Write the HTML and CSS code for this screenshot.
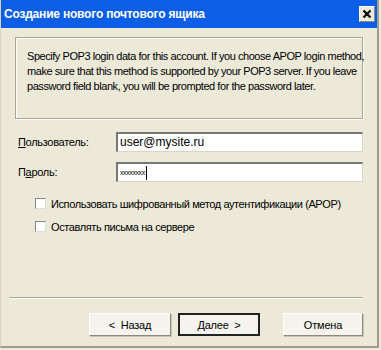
FILE: index.html
```html
<!DOCTYPE html>
<html lang="ru">
<head>
  <meta charset="UTF-8" />
  <title>Создание нового почтового ящика</title>
  <link rel="stylesheet" href="styles.css">
</head>
<body>
  <div class="window">
    <div class="titlebar">
      <span class="caption">Создание нового почтового ящика</span>
      <span class="close">
        <svg width="10" height="10" viewBox="0 0 10 10">
          <path d="M1.5 1.5 L8.5 8.5 M8.5 1.5 L1.5 8.5" stroke="#000" stroke-width="2.2" />
        </svg>
      </span>
    </div>

    <div class="content">
      <div class="info">
        Specify POP3 login data for this account. If you choose APOP login method,<br>
        make sure that this method is supported by your POP3 server. If you leave<br>
        password field blank, you will be prompted for the password later.
      </div>

      <div class="row">
        <label class="label"><u>П</u>ользователь:</label>
        <div class="field">user@mysite.ru</div>
      </div>
      <div class="row">
        <label class="label">П<u>а</u>роль:</label>
        <div class="field pass">xxxxxxxx<span class="caret"></span></div>
      </div>

      <div class="checks">
        <div class="check"><span class="box"></span>Использовать шифрованный метод аутентификации (APOP)</div>
        <div class="check"><span class="box"></span>Оставлять письма на сервере</div>
      </div>

      <div class="spacer"></div>
      <div class="sep"></div>

      <div class="buttons">
        <button class="btn">&lt; &nbsp;Назад</button>
        <button class="btn default">Далее &nbsp;&gt;</button>
        <button class="btn cancel">Отмена</button>
      </div>
    </div>
  </div>
</body>
</html>
```

FILE: styles.css
```css
* {
  box-sizing: border-box;
  margin: 0;
  padding: 0;
}

body {
  width: 381px;
  height: 350px;
  overflow: hidden;
  background: #ece9d8;
  font-family: "Liberation Sans", Arial, sans-serif;
  font-size: 11px;
  letter-spacing: -0.3px;
  color: #000;
}

.window {
  width: 379px;
  height: 348px;
  display: flex;
  flex-direction: column;
  background: #ece9d8;
  border-right: 2px solid #a09d8c;
  border-bottom: 2px solid #a09d8c;
  border-left: 1px solid #d8d4c4;
}

.titlebar {
  height: 28px;
  background: #0c5ee6;
  display: flex;
  align-items: center;
  justify-content: space-between;
  padding: 0 2px 0 3px;
}

.caption {
  color: #fff;
  font-weight: bold;
  font-size: 12px;
  letter-spacing: -0.2px;
}

.close {
  width: 16px;
  height: 16px;
  background: #ece9d8;
  border: 1px solid #fff;
  border-right-color: #888;
  border-bottom-color: #888;
  display: flex;
  align-items: center;
  justify-content: center;
}

.content {
  flex: 1;
  display: flex;
  flex-direction: column;
  padding: 9px 14px 10px 14px;
}

.info {
  height: 82px;
  border: 1px solid #a8a594;
  box-shadow: inset 1px 1px 0 #fff, 1px 1px 0 #fff;
  padding: 11px 4px 0 11px;
  line-height: 15px;
  letter-spacing: -0.45px;
  white-space: nowrap;
  margin-bottom: 13px;
}

.row {
  display: flex;
  align-items: center;
  height: 20px;
  margin-bottom: 10px;
}

.label {
  width: 101px;
  padding-left: 3px;
}

.field {
  flex: 1;
  height: 20px;
  background: #fff;
  border: 1px solid #d8d6c8;
  border-top: 2px solid #777;
  border-left: 2px solid #777;
  padding: 1px 2px;
  font-size: 12px;
  letter-spacing: 0;
  line-height: 15px;
}

.pass {
  font-size: 7px;
  letter-spacing: -0.4px;
  display: flex;
  align-items: center;
}

.caret {
  width: 1px;
  height: 14px;
  background: #000;
  margin-left: 1px;
}

.checks {
  margin-top: 0;
  padding-left: 20px;
}

.check {
  display: flex;
  align-items: center;
  height: 23px;
  letter-spacing: -0.4px;
}

.box {
  width: 11px;
  height: 11px;
  background: #fff;
  border: 1px solid #888;
  border-right-color: #ddd;
  border-bottom-color: #ddd;
  margin-right: 5px;
}

.spacer {
  flex: 1;
}

.sep {
  height: 2px;
  border-top: 1px solid #a8a594;
  border-bottom: 1px solid #fff;
  margin: 0 0 14px -6px;
}

.buttons {
  display: flex;
  justify-content: flex-end;
  gap: 7px;
}

.btn {
  width: 82px;
  height: 23px;
  font-family: "Liberation Sans", Arial, sans-serif;
  font-size: 11px;
  letter-spacing: -0.2px;
  background: #f4f3ee;
  border: 1px solid #fff;
  border-right-color: #8c8a7c;
  border-bottom-color: #8c8a7c;
  box-shadow: 1px 1px 0 #c8c5b5;
}

.default {
  border: 2px solid #222;
  box-shadow: none;
}

.cancel {
  margin-left: 16px;
  width: 80px;
}
```
